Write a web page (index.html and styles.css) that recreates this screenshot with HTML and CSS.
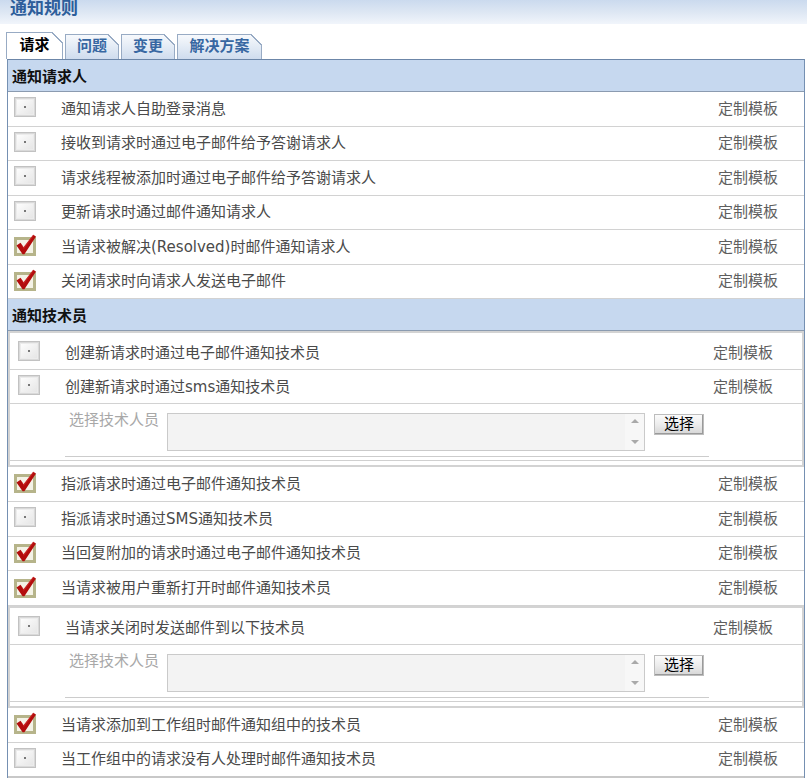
FILE: index.html
```html
<!DOCTYPE html>
<html lang="zh-CN">
<head>
<meta charset="utf-8">
<title>通知规则</title>
<link rel="stylesheet" href="styles.css">
</head>
<body>
<svg class="defs" width="0" height="0" aria-hidden="true">
  <defs>
    <linearGradient id="offg" x1="0" y1="0" x2="1" y2="1">
      <stop offset="0" stop-color="#fdfdfd"/>
      <stop offset="1" stop-color="#e6e6e6"/>
    </linearGradient>
    <symbol id="off" viewBox="0 0 22 22">
      <rect x="0" y="1" width="22" height="20" fill="#c2c2c2"/>
      <rect x="1" y="2" width="20" height="18" fill="#d9d9d9"/>
      <rect x="2" y="3" width="18" height="16" fill="#ececec"/>
      <rect x="3" y="4" width="16" height="14" fill="url(#offg)"/>
      <rect x="10" y="10" width="2" height="2" fill="#777777"/>
    </symbol>
    <symbol id="on" viewBox="0 0 22 22">
      <rect x="1.5" y="4.5" width="19" height="16" fill="#f4f2e6" stroke="#b6b48a" stroke-width="3"/>
      <polygon points="2.5,11.5 6.5,8.8 9.6,13.2 19.2,0.8 22,2.6 10.4,20.2 8.6,20.2" fill="#b30d0d"/>
      <polygon points="6.5,8.8 9.6,13.2 19.2,0.8 20,1.3 9.8,15" fill="#d83434" opacity="0.6"/>
    </symbol>
  </defs>
</svg>

<div class="titlebar"><span class="title">通知规则</span></div>

<div class="tabs">
  <div class="tab tab-active">请求</div>
  <div class="tab tab-w54">问题</div>
  <div class="tab tab-w54">变更</div>
  <div class="tab tab-w85">解决方案</div>
</div>

<div class="panel">
  <div class="sec">通知请求人</div>
  <div class="row"><svg class="cb"><use href="#off"/></svg><span class="lbl">通知请求人自助登录消息</span><span class="tpl">定制模板</span></div>
  <div class="row"><svg class="cb"><use href="#off"/></svg><span class="lbl">接收到请求时通过电子邮件给予答谢请求人</span><span class="tpl">定制模板</span></div>
  <div class="row"><svg class="cb"><use href="#off"/></svg><span class="lbl">请求线程被添加时通过电子邮件给予答谢请求人</span><span class="tpl">定制模板</span></div>
  <div class="row"><svg class="cb"><use href="#off"/></svg><span class="lbl">更新请求时通过邮件通知请求人</span><span class="tpl">定制模板</span></div>
  <div class="row"><svg class="cb"><use href="#on"/></svg><span class="lbl">当请求被解决(Resolved)时邮件通知请求人</span><span class="tpl">定制模板</span></div>
  <div class="row"><svg class="cb"><use href="#on"/></svg><span class="lbl">关闭请求时向请求人发送电子邮件</span><span class="tpl">定制模板</span></div>

  <div class="sec">通知技术员</div>
  <div class="box">
    <div class="row brow"><svg class="cb"><use href="#off"/></svg><span class="lbl">创建新请求时通过电子邮件通知技术员</span><span class="tpl">定制模板</span></div>
    <div class="row brow"><svg class="cb"><use href="#off"/></svg><span class="lbl">创建新请求时通过sms通知技术员</span><span class="tpl">定制模板</span></div>
    <div class="sel">
      <div class="selin">
        <span class="sellbl">选择技术人员</span>
        <div class="ta"><div class="sb"><i class="up"></i><i class="dn"></i></div></div>
        <button class="btn" type="button">选择</button>
      </div>
    </div>
  </div>
  <div class="row row2"><svg class="cb"><use href="#on"/></svg><span class="lbl">指派请求时通过电子邮件通知技术员</span><span class="tpl">定制模板</span></div>
  <div class="row row2"><svg class="cb"><use href="#off"/></svg><span class="lbl">指派请求时通过SMS通知技术员</span><span class="tpl">定制模板</span></div>
  <div class="row row2"><svg class="cb"><use href="#on"/></svg><span class="lbl">当回复附加的请求时通过电子邮件通知技术员</span><span class="tpl">定制模板</span></div>
  <div class="row row2"><svg class="cb"><use href="#on"/></svg><span class="lbl">当请求被用户重新打开时邮件通知技术员</span><span class="tpl">定制模板</span></div>
  <div class="box">
    <div class="row brow"><svg class="cb"><use href="#off"/></svg><span class="lbl">当请求关闭时发送邮件到以下技术员</span><span class="tpl">定制模板</span></div>
    <div class="sel">
      <div class="selin">
        <span class="sellbl">选择技术人员</span>
        <div class="ta"><div class="sb"><i class="up"></i><i class="dn"></i></div></div>
        <button class="btn" type="button">选择</button>
      </div>
    </div>
  </div>
  <div class="row row2"><svg class="cb"><use href="#on"/></svg><span class="lbl">当请求添加到工作组时邮件通知组中的技术员</span><span class="tpl">定制模板</span></div>
  <div class="row row2 row-last"><svg class="cb"><use href="#off"/></svg><span class="lbl">当工作组中的请求没有人处理时邮件通知技术员</span><span class="tpl">定制模板</span></div>
</div>
</body>
</html>
```

FILE: styles.css
```css
* { box-sizing: border-box; }

html, body {
  margin: 0;
  padding: 0;
  background: #ffffff;
  font-family: "DejaVu Sans", "Noto Sans CJK SC", sans-serif;
  font-size: 15px;
  color: #444444;
}

.defs {
  position: absolute;
  width: 0;
  height: 0;
  overflow: hidden;
}

.titlebar {
  height: 24px;
  background: linear-gradient(to bottom, #cbdaee 0%, #dfe8f4 55%, #f1f5fb 100%);
  overflow: hidden;
}

.title {
  display: block;
  padding-left: 10px;
  line-height: 17px;
  font-size: 17px;
  font-weight: bold;
  color: #2d5e9b;
}

.tabs {
  display: flex;
  align-items: flex-end;
  gap: 2px;
  height: 27px;
  margin: 8px 0 0 6px;
}

.tab {
  position: relative;
  height: 25px;
  line-height: 23px;
  text-align: center;
  font-weight: bold;
  font-size: 15px;
  color: #3767a2;
  border: 1px solid #98abc4;
  border-bottom: none;
  background: linear-gradient(to bottom, #f7f9fc 0%, #e3ebf5 50%, #cfdcee 100%);
}

.tab::after {
  content: "";
  position: absolute;
  top: -1px;
  right: -1px;
  width: 11px;
  height: 11px;
  background: linear-gradient(to bottom left, #ffffff 0 46%, #98abc4 46% 57%, transparent 57%);
}

.tab-active {
  width: 57px;
  height: 27px;
  line-height: 25px;
  color: #000000;
  background: #ffffff;
}

.tab-w54 { width: 54px; }
.tab-w85 { width: 85px; }

.panel {
  margin-left: 7px;
  width: 798px;
  border: 1px solid #7590b2;
  border-top-color: #6c86a8;
  border-bottom: none;
}

.sec {
  display: flex;
  align-items: center;
  height: 32px;
  padding-left: 4px;
  background: #c6d8ef;
  border-bottom: 1px solid #8b9bb0;
  font-weight: bold;
  font-size: 15px;
  color: #111111;
}

.row {
  display: flex;
  align-items: center;
  height: 34.5px;
  padding: 0 26px 3px 6px;
  border-bottom: 1px solid #d2d2d2;
}

.row2 {
  height: 34.75px;
}

.row-last {
  border-bottom: 2px solid #c8c8c8;
}

.cb {
  width: 22px;
  height: 22px;
  flex: none;
}

.lbl {
  flex: 1;
  margin-left: 25px;
  color: #4a4a4a;
  white-space: nowrap;
}

.tpl {
  color: #5e5e5e;
  white-space: nowrap;
}

.box {
  border: 2px solid #d3d3d3;
  padding: 3px 0 4px;
}

.brow {
  height: 34px;
  padding: 0 29px 3px 8px;
}

.sel {
  padding: 9px 0 3px;
  border-bottom: 1px solid #d0d0d0;
}

.selin {
  display: flex;
  align-items: flex-start;
  margin-left: 55px;
  width: 644px;
  padding-bottom: 5px;
  border-bottom: 1px solid #cccccc;
}

.sellbl {
  width: 94px;
  padding-left: 4px;
  margin-right: 8px;
  margin-top: -3px;
  line-height: 20px;
  color: #a8a8a8;
  white-space: nowrap;
}

.ta {
  display: flex;
  justify-content: flex-end;
  width: 478px;
  height: 38px;
  border: 1px solid #cacaca;
  background: #f3f3f3;
}

.sb {
  display: flex;
  flex-direction: column;
  justify-content: space-between;
  align-items: center;
  width: 19px;
  padding: 5px 0 6px;
  background: #f7f7f7;
}

.up, .dn {
  display: block;
  width: 0;
  height: 0;
  border-left: 4px solid transparent;
  border-right: 4px solid transparent;
}

.up { border-bottom: 4px solid #a9a9a9; }
.dn { border-top: 4px solid #a9a9a9; }

.btn {
  margin-left: 9px;
  margin-top: 1px;
  width: 50px;
  height: 21px;
  padding: 0;
  font-family: "DejaVu Sans", "Noto Sans CJK SC", sans-serif;
  font-size: 15px;
  line-height: 17px;
  color: #000000;
  background: linear-gradient(to bottom, #fbfbfb 0%, #ececec 50%, #d6d6d6 100%);
  border: 1px solid;
  border-color: #ffffff #555555 #555555 #ffffff;
  box-shadow: inset -1px -1px 0 #9a9a9a;
  outline: 1px solid #bdbdbd;
  outline-offset: -1px;
}
```
